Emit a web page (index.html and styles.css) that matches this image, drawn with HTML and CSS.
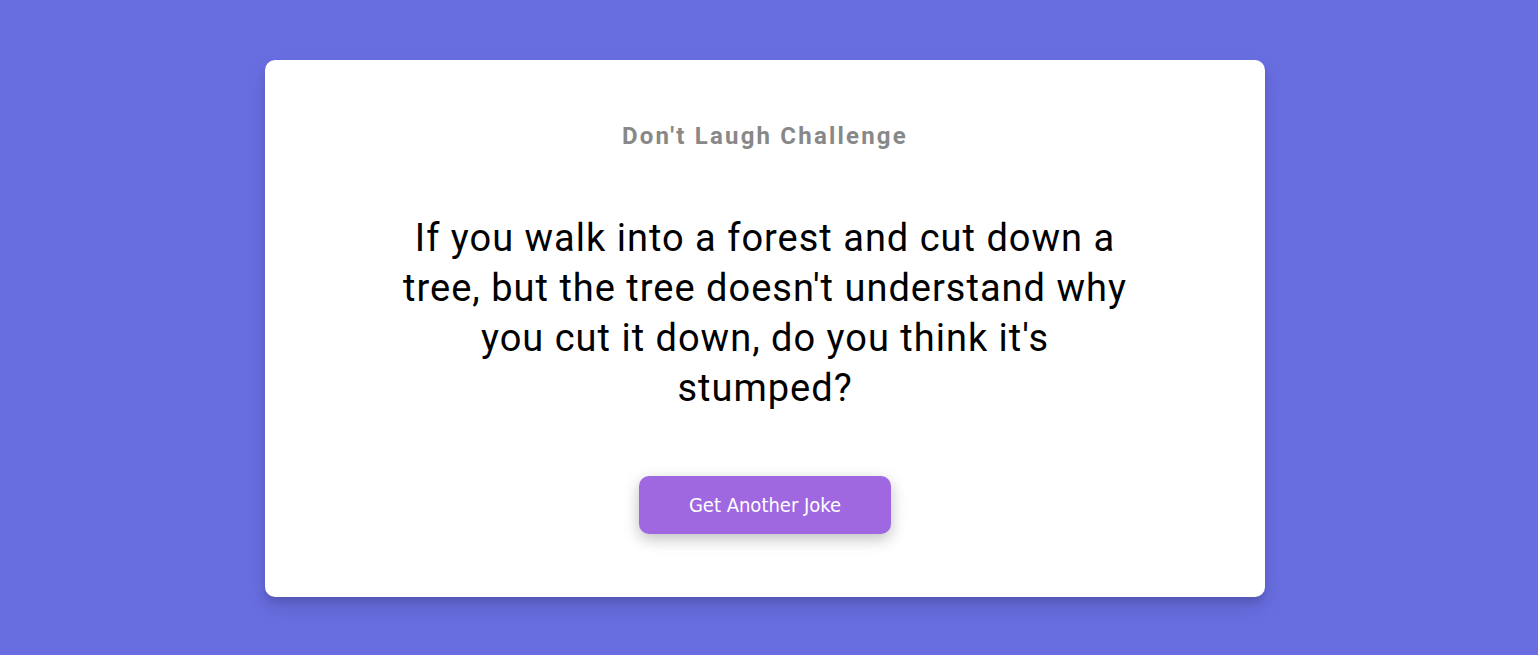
FILE: index.html
```html
<!DOCTYPE html>
<html lang="en">
<head>
<meta charset="utf-8">
<title>Don't Laugh Challenge</title>
<link rel="stylesheet" href="styles.css">
</head>
<body>
<main class="page">
  <section class="card">
    <h3 class="title">Don't Laugh Challenge</h3>
    <div class="joke">If you walk into a forest and cut down a tree, but the tree doesn't understand why you cut it down, do you think it's stumped?</div>
    <button class="btn">Get Another Joke</button>
  </section>
</main>
</body>
</html>
```
FILE: styles.css
```css
* { box-sizing: border-box; }
html, body {
  margin: 0;
  padding: 0;
  height: 100%;
}
body {
  background: #686de0;
  font-family: Roboto, "Noto Sans", sans-serif;
}
.page {
  display: flex;
  justify-content: center;
  padding: 60px 8px 0 0;
}
.card {
  width: 1000px;
  height: 537px;
  background: #fff;
  border-radius: 10px;
  box-shadow: 0 10px 20px rgba(0, 0, 0, 0.1), 0 6px 6px rgba(0, 0, 0, 0.1);
  display: flex;
  flex-direction: column;
  align-items: center;
  padding: 60px 20px 0;
  text-align: center;
}
.title {
  margin: 0;
  color: #888;
  font-size: 24px;
  font-weight: 700;
  letter-spacing: 2.2px;
  line-height: 32px;
}
.joke {
  margin-top: 61px;
  max-width: 740px;
  font-size: 38px;
  line-height: 50px;
  color: #000;
  letter-spacing: 1px;
}
.btn {
  margin-top: 63px;
  width: 252px;
  height: 58px;
  border: 0;
  border-radius: 10px;
  background: #9f68e0;
  color: #fff;
  font-family: "DejaVu Sans Condensed", "DejaVu Sans", sans-serif;
  font-size: 20px;
  box-shadow: 0 5px 15px rgba(0, 0, 0, 0.25);
  cursor: pointer;
}
```
